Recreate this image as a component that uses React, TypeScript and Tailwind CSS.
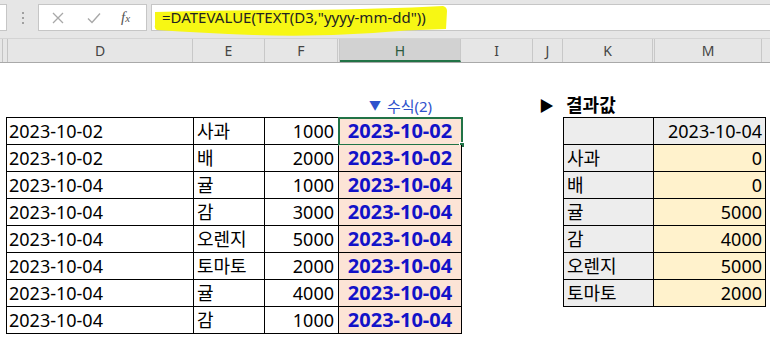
const rows = [
  ["2023-10-02", "사과", "1000"],
  ["2023-10-02", "배", "2000"],
  ["2023-10-04", "귤", "1000"],
  ["2023-10-04", "감", "3000"],
  ["2023-10-04", "오렌지", "5000"],
  ["2023-10-04", "토마토", "2000"],
  ["2023-10-04", "귤", "4000"],
  ["2023-10-04", "감", "1000"],
];

const result = [
  ["사과", "0"],
  ["배", "0"],
  ["귤", "5000"],
  ["감", "4000"],
  ["오렌지", "5000"],
  ["토마토", "2000"],
];

const headers = [
  { label: "D", w: "w-[185px]" },
  { label: "E", w: "w-[72px]" },
  { label: "F", w: "w-[73px]" },
  { label: "", w: "w-[2px]" },
  { label: "H", w: "w-[121px]", sel: true },
  { label: "I", w: "w-[72px]" },
  { label: "J", w: "w-[30px]" },
  { label: "K", w: "w-[90px]" },
  { label: "", w: "w-[2px]" },
  { label: "M", w: "w-[107px]" },
];

export default function App() {
  return (
    <div className="w-[770px] h-[338px] bg-white overflow-hidden text-black font-['Noto_Sans','Noto_Sans_CJK_KR',sans-serif]">
      {/* formula bar */}
      <div className="relative h-[38px] bg-[#e6e6e6] flex items-start pt-[4px]">
        <div className="w-[7px] h-[27px] bg-white border border-l-0 border-[#c6c6c6]" />
        <div className="w-[31px] h-[27px] flex flex-col items-center justify-center gap-[3px]">
          <div className="w-[2px] h-[2px] bg-[#a0a0a0]" />
          <div className="w-[2px] h-[2px] bg-[#a0a0a0]" />
          <div className="w-[2px] h-[2px] bg-[#a0a0a0]" />
        </div>
        <div className="w-[109px] h-[27px] bg-white border border-[#c6c6c6] flex items-center">
          <svg width="12" height="12" viewBox="0 0 12 12" className="ml-[13px]">
            <path d="M1 1 L11 11 M11 1 L1 11" stroke="#a8a8a8" strokeWidth="1.3" fill="none" />
          </svg>
          <svg width="14" height="12" viewBox="0 0 14 12" className="ml-[23px]">
            <path d="M1 6.5 L5 10.5 L13 1.5" stroke="#a8a8a8" strokeWidth="1.4" fill="none" />
          </svg>
          <span className="ml-[20px] italic text-[15px] leading-none text-[#555] font-['Liberation_Serif',serif]">
            f<span className="text-[11px]">x</span>
          </span>
        </div>
        <div className="relative ml-[4px] flex-1 h-[27px] bg-white border border-r-0 border-[#c6c6c6] flex items-center pl-[10px]">
          <span className="relative z-10 text-[15px] text-[#222]">=DATEVALUE(TEXT(D3,"yyyy-mm-dd"))</span>
        </div>
        <svg width="296" height="32" viewBox="0 0 296 32" className="absolute left-[153px] top-[5px] z-0">
          <path
            d="M2 7 Q 60 5 150 5 Q 230 4 290 1 Q 294 2 294 6 L 293 24 Q 250 25 220 28 Q 160 32 100 30 Q 50 28 4 25 Q 1 24 2 20 Z"
            fill="#f7f714"
          />
        </svg>
      </div>

      {/* column headers */}
      <div className="h-[25px] flex bg-[#e6e6e6] border-t border-[#d4d4d4] border-b border-b-[#a9a9a9] text-[14px] text-[#444]">
        <div className="w-[8px] flex">
          <div className="w-[3px] border-r border-[#c4c4c4]" />
          <div className="w-[5px] border-r border-[#c4c4c4]" />
        </div>
        {headers.map((h, i) => (
          <div
            key={i}
            className={`${h.w} border-r border-[#c8c8c8] flex items-center justify-center ${
              h.sel ? "bg-[#d2d2d2] border-b-2 border-b-[#217346] text-[#2b5a3e] pt-[2px]" : ""
            }`}
          >
            {h.label}
          </div>
        ))}
      </div>

      {/* body */}
      <div className="flex pt-[32px] pl-[6px]">
        <div className="flex flex-col">
          <div className="h-[22px] flex justify-end">
            <div className="w-[123px] flex items-center justify-center text-[15px] text-[#2f52cc] gap-[6px]">
              <span className="text-[12px]">▼</span>
              <span>수식(2)</span>
            </div>
          </div>
          <div className="border-l border-t border-black">
            {rows.map((r, i) => (
              <div key={i} className="grid grid-cols-[187px_71px_74px_123px] h-[27px] text-[18px] leading-none">
                <div className="border-r border-b border-black pl-[2px] flex items-center">{r[0]}</div>
                <div className="border-r border-b border-black pl-[3px] flex items-center">{r[1]}</div>
                <div className="border-r border-b border-black pr-[4px] flex items-center justify-end">{r[2]}</div>
                <div
                  className={`relative border-r border-b border-black bg-[#fce4d6] flex items-center justify-center text-[20px] font-bold text-[#1212c8] ${
                    i === 0 ? "outline-2 outline-[#217346] -outline-offset-1" : ""
                  }`}
                >
                  {r[0]}
                  {i === 0 && (
                    <div className="absolute right-[-4px] bottom-[-4px] w-[6px] h-[6px] bg-[#217346] border border-white" />
                  )}
                </div>
              </div>
            ))}
          </div>
        </div>

        <div className="ml-[77px] flex flex-col">
          <div className="h-[22px] flex items-center gap-[12px] pb-[2px]">
            <span className="text-[15px]">▶</span>
            <span className="text-[18px] font-bold">결과값</span>
          </div>
          <div className="ml-[24px] border-l border-t border-black">
            <div className="grid grid-cols-[90px_112px] h-[27px] text-[18px] leading-none">
              <div className="border-r border-b border-black bg-[#ededed]" />
              <div className="border-r border-b border-black bg-[#ededed] pr-[3px] flex items-center justify-end">2023-10-04</div>
            </div>
            {result.map((r, i) => (
              <div key={i} className="grid grid-cols-[90px_112px] h-[27px] text-[18px] leading-none">
                <div className="border-r border-b border-black bg-[#ededed] pl-[3px] flex items-center">{r[0]}</div>
                <div className="border-r border-b border-black bg-[#fff2cc] pr-[3px] flex items-center justify-end">{r[1]}</div>
              </div>
            ))}
          </div>
        </div>
      </div>
    </div>
  );
}
